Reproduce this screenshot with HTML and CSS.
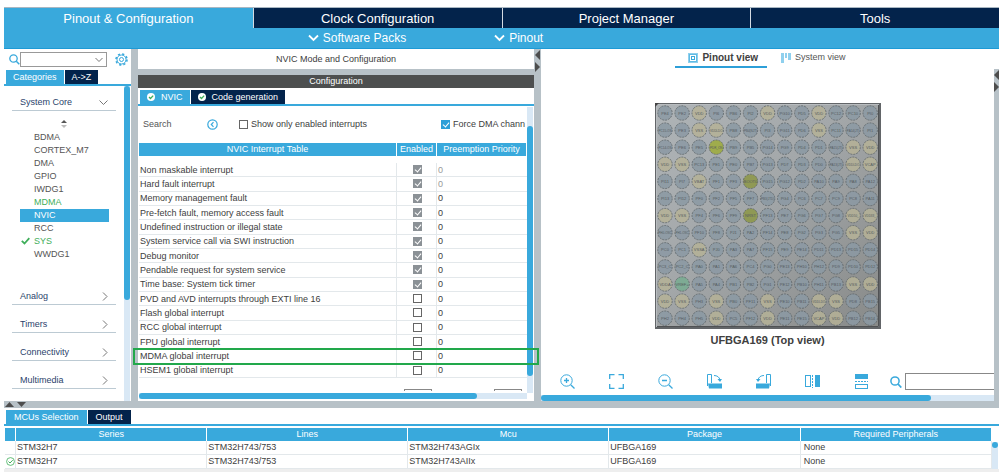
FILE: index.html
```html
<!DOCTYPE html>
<html lang="en">
<head>
    <meta charset="UTF-8">
    <meta name="viewport" content="width=device-width, initial-scale=1.0">
    <title>Pinout &amp; Configuration</title>
    <link rel="stylesheet" href="styles.css">
</head>
<body>
    <nav class="main-tabs">
        <button class="main-tab active">Pinout &amp; Configuration</button>
        <button class="main-tab">Clock Configuration</button>
        <button class="main-tab">Project Manager</button>
        <button class="main-tab">Tools</button>
    </nav>
    <div class="sub-bar">
        <button class="sub-menu">
            <svg width="11" height="8" viewBox="0 0 11 8"><path d="M1 1.500L5.500 6L10 1.500" fill="none" stroke="#fff" stroke-width="1.800"/></svg>
            Software Packs
        </button>
        <button class="sub-menu">
            <svg width="11" height="8" viewBox="0 0 11 8"><path d="M1 1.500L5.500 6L10 1.500" fill="none" stroke="#fff" stroke-width="1.800"/></svg>
            Pinout
        </button>
    </div>

    <main class="workspace">
        <!-- categories -->
        <aside class="sidebar">
            <div class="side-search">
                <svg width="11" height="11" viewBox="0 0 11 11"><circle cx="4.500" cy="4.500" r="3.700" fill="none" stroke="#39a9dc" stroke-width="1.300"/><path d="M7.300 7.300L10.300 10.300" stroke="#39a9dc" stroke-width="1.500"/></svg>
                <span class="combo">
                    <select aria-label="Search peripheral"><option></option></select>
                    <svg class="combo-arrow" width="8" height="6" viewBox="0 0 8 6"><path d="M.5 1L4 4.500L7.500 1" fill="none" stroke="#777"/></svg>
                </span>
                <button class="plain-btn" aria-label="Settings">
                    <svg width="13" height="13" viewBox="0 0 13 13" fill="none" stroke="#39a9dc"><circle cx="6.500" cy="6.500" r="5.500" stroke-width="1.600" stroke-dasharray="2.160 2.160"/><circle cx="6.500" cy="6.500" r="4.500"/><circle cx="6.500" cy="6.500" r="2"/></svg>
                </button>
            </div>
            <div class="tabs side-tabs">
                <button class="tab active">Categories</button>
                <button class="tab">A-&gt;Z</button>
            </div>
            <div class="side-body">
                <div class="side-list">
                    <button class="group">System Core
                        <svg width="9" height="6" viewBox="0 0 9 6"><path d="M.5 .5L4.500 4.500L8.500 .5" fill="none" stroke="#777"/></svg>
                    </button>
                    <svg class="sorter" width="6" height="8" viewBox="0 0 6 8"><path d="M0 3L3 0L6 3Z" fill="#555"/><path d="M0 5L3 8L6 5Z" fill="#bbb"/></svg>
                    <ul class="items">
                        <li>BDMA</li>
                        <li>CORTEX_M7</li>
                        <li>DMA</li>
                        <li>GPIO</li>
                        <li>IWDG1</li>
                        <li class="green">MDMA</li>
                        <li class="selected">NVIC</li>
                        <li>RCC</li>
                        <li class="green"><svg class="tick" width="9" height="8" viewBox="0 0 9 8"><path d="M.8 3.800L3.500 6.500L8.300 1.200" fill="none" stroke="#3fae5a" stroke-width="1.800"/></svg>SYS</li>
                        <li>WWDG1</li>
                    </ul>
                    <button class="group">Analog
                        <svg width="6" height="9" viewBox="0 0 6 9"><path d="M1 .5L5 4.500L1 8.500" fill="none" stroke="#777"/></svg>
                    </button>
                    <button class="group">Timers
                        <svg width="6" height="9" viewBox="0 0 6 9"><path d="M1 .5L5 4.500L1 8.500" fill="none" stroke="#777"/></svg>
                    </button>
                    <button class="group">Connectivity
                        <svg width="6" height="9" viewBox="0 0 6 9"><path d="M1 .5L5 4.500L1 8.500" fill="none" stroke="#777"/></svg>
                    </button>
                    <button class="group">Multimedia
                        <svg width="6" height="9" viewBox="0 0 6 9"><path d="M1 .5L5 4.500L1 8.500" fill="none" stroke="#777"/></svg>
                    </button>
                </div>
                <div class="vbar"><div class="thumb side-thumb"></div></div>
            </div>
        </aside>

        <div class="split"></div>

        <!-- NVIC configuration -->
        <section class="config">
            <div class="config-title">NVIC Mode and Configuration</div>
            <div class="config-head">Configuration</div>
            <div class="tabs config-tabs">
                <button class="tab active">
                    <svg width="8" height="8" viewBox="0 0 8 8"><circle cx="4" cy="4" r="4" fill="#fff"/><path d="M2 4L3.500 5.500L6.200 2.600" fill="none" stroke="#3fae5a" stroke-width="1.300"/></svg>
                    NVIC
                </button>
                <button class="tab">
                    <svg width="8" height="8" viewBox="0 0 8 8"><circle cx="4" cy="4" r="4" fill="#fff"/><path d="M2 4L3.500 5.500L6.200 2.600" fill="none" stroke="#3fae5a" stroke-width="1.300"/></svg>
                    Code generation
                </button>
            </div>
            <div class="config-body">
                <div class="config-content">
                    <div class="filters">
                        <span class="search-label">Search</span>
                        <button class="plain-btn" aria-label="Previous">
                            <svg width="11" height="11" viewBox="0 0 11 11" fill="none" stroke="#39a9dc"><circle cx="5.500" cy="5.500" r="4.700" stroke-width="1.200"/><path d="M6.500 3.200L4.300 5.500L6.500 7.800" stroke-width="1.200"/></svg>
                        </button>
                        <label class="check-label only-enabled"><input type="checkbox"> Show only enabled interrupts</label>
                        <label class="check-label"><input type="checkbox" class="blue" checked> Force DMA chann</label>
                    </div>
                    <table class="interrupts">
                        <thead>
                            <tr><th>NVIC Interrupt Table</th><th class="col-enabled">Enabled</th><th class="col-priority">Preemption Priority</th></tr>
                        </thead>
                        <tbody>
                            <tr class="off"><td>Non maskable interrupt</td><td><input type="checkbox" aria-label="Non maskable interrupt" checked disabled></td><td>0</td></tr>
                            <tr class="off"><td>Hard fault interrupt</td><td><input type="checkbox" aria-label="Hard fault interrupt" checked disabled></td><td>0</td></tr>
                            <tr><td>Memory management fault</td><td><input type="checkbox" aria-label="Memory management fault" checked disabled></td><td>0</td></tr>
                            <tr><td>Pre-fetch fault, memory access fault</td><td><input type="checkbox" aria-label="Pre-fetch fault" checked disabled></td><td>0</td></tr>
                            <tr><td>Undefined instruction or illegal state</td><td><input type="checkbox" aria-label="Undefined instruction" checked disabled></td><td>0</td></tr>
                            <tr><td>System service call via SWI instruction</td><td><input type="checkbox" aria-label="System service call" checked disabled></td><td>0</td></tr>
                            <tr><td>Debug monitor</td><td><input type="checkbox" aria-label="Debug monitor" checked disabled></td><td>0</td></tr>
                            <tr><td>Pendable request for system service</td><td><input type="checkbox" aria-label="Pendable request" checked disabled></td><td>0</td></tr>
                            <tr><td>Time base: System tick timer</td><td><input type="checkbox" aria-label="Time base" checked disabled></td><td>0</td></tr>
                            <tr><td>PVD and AVD interrupts through EXTI line 16</td><td><input type="checkbox" aria-label="PVD and AVD interrupts"></td><td>0</td></tr>
                            <tr><td>Flash global interrupt</td><td><input type="checkbox" aria-label="Flash global interrupt"></td><td>0</td></tr>
                            <tr><td>RCC global interrupt</td><td><input type="checkbox" aria-label="RCC global interrupt"></td><td>0</td></tr>
                            <tr><td>FPU global interrupt</td><td><input type="checkbox" aria-label="FPU global interrupt"></td><td>0</td></tr>
                            <tr><td>MDMA global interrupt</td><td><input type="checkbox" aria-label="MDMA global interrupt"></td><td>0</td></tr>
                            <tr><td>HSEM1 global interrupt</td><td><input type="checkbox" aria-label="HSEM1 global interrupt"></td><td>0</td></tr>
                        </tbody>
                    </table>
                    <div class="below-table">
                        <input type="text" aria-label="Preemption priority">
                        <input type="text" aria-label="Sub priority">
                    </div>
                </div>
                <div class="vbar"><div class="thumb config-thumb"></div></div>
                <div class="hbar"><div class="thumb hthumb"></div></div>
            </div>
            <div class="highlight"></div>
        </section>

        <div class="split arrows">
            <svg width="5" height="22" viewBox="0 0 5 22" fill="#4d4d4d"><path d="M5 0V10L0 5Z"/><path d="M0 12V22L5 17Z"/></svg>
        </div>

        <!-- pinout view -->
        <section class="pinout">
            <div class="view-tabs">
                <button class="view-tab active">
                    <svg width="10" height="10" viewBox="0 0 10 10" fill="none" stroke="#39a9dc"><rect x=".5" y=".5" width="9" height="9" stroke="#8fd0ee"/><rect x="1.500" y="1.500" width="7" height="7" stroke="#60bbe4"/><rect x="3.500" y="3.500" width="3" height="3"/></svg>
                    Pinout view
                </button>
                <button class="view-tab">
                    <svg width="10" height="10" viewBox="0 0 10 10" fill="#8fd0ee"><rect width="3" height="10"/><rect x="4" width="2" height="5"/><rect x="7" width="3" height="7"/></svg>
                    System view
                </button>
            </div>
            <div class="pinout-body">
                <div class="pinout-main">
                    <div class="canvas">
                        <svg id="chip" class="chip" width="226" height="226" viewBox="0 0 226 226">
                            <defs>
                                <linearGradient id="body" x1="0" y1="0" x2="1" y2="1">
                                    <stop offset="0" stop-color="#afb4b7"/>
                                    <stop offset=".45" stop-color="#a3a7a9"/>
                                    <stop offset="1" stop-color="#888a89"/>
                                </linearGradient>
                            </defs>
                            <rect width="226" height="226" fill="#626568"/>
                            <rect x="1" y="1" width="223" height="223" fill="#b8bcbf"/>
                            <rect x="2" y="2" width="221" height="221" fill="url(#body)"/>
                            <path d="M223.500 2V223.500H2" fill="none" stroke="#505254"/>
                            <path d="M0 0H4L0 4Z" fill="#444"/>
                        </svg>
                        <div class="caption">UFBGA169 (Top view)</div>
                    </div>
                    <div class="tools">
                        <button class="plain-btn" aria-label="Zoom in"><svg width="15" height="15" viewBox="0 0 15 15" fill="none" stroke="#39a9dc"><circle cx="6.500" cy="6.500" r="5.700"/><path d="M10.700 10.700L14.500 14.500M4 6.500H9M6.500 4V9" stroke-width="1.300"/></svg></button>
                        <button class="plain-btn" aria-label="Fit"><svg width="15" height="15" viewBox="0 0 15 15" fill="none" stroke="#39a9dc"><path d="M.7 5V.7H5.500M9.500 .7H14.300V5M14.300 10V14.300H9.500M5.500 14.300H.7V10" stroke-width="1.300"/></svg></button>
                        <button class="plain-btn" aria-label="Zoom out"><svg width="15" height="15" viewBox="0 0 15 15" fill="none" stroke="#39a9dc"><circle cx="6.500" cy="6.500" r="5.700"/><path d="M10.700 10.700L14.500 14.500M4 6.500H9" stroke-width="1.300"/></svg></button>
                        <button class="plain-btn" aria-label="Rotate right"><svg width="15" height="15" viewBox="0 0 15 15" fill="none" stroke="#39a9dc"><path d="M.5 12V.5H4.500V9"/><path d="M1 9.500H15V14.500H2Z" fill="#39a9dc" stroke="none"/><path d="M7 1.500C10 1.500 12.500 3 13 6"/><path d="M10.500 5H15L13 8Z" fill="#39a9dc" stroke="none"/></svg></button>
                        <button class="plain-btn" aria-label="Rotate left"><svg width="15" height="15" viewBox="0 0 15 15" fill="none" stroke="#39a9dc"><path d="M14.500 12V.5H10.500V9"/><path d="M14 9.500H0V14.500H13Z" fill="#39a9dc" stroke="none"/><path d="M8 1.500C5 1.500 2.500 3 2 6"/><path d="M4.500 5H0L2 8Z" fill="#39a9dc" stroke="none"/></svg></button>
                        <button class="plain-btn" aria-label="Flip horizontally"><svg width="15" height="15" viewBox="0 0 15 15" fill="none" stroke="#39a9dc"><rect x=".5" y="1.500" width="5" height="11"/><path d="M7.500 1V14" stroke-dasharray="2 1"/><rect x="10" y="1" width="5" height="12" fill="#39a9dc" stroke="none"/></svg></button>
                        <button class="plain-btn" aria-label="Flip vertically"><svg width="15" height="15" viewBox="0 0 15 15" fill="none" stroke="#39a9dc"><rect x="1" y="0" width="13" height="5" fill="#39a9dc" stroke="none"/><path d="M1 7.500H14" stroke-dasharray="2 1"/><rect x="1.500" y="10.500" width="12" height="4"/></svg></button>
                        <div class="find">
                            <svg width="12" height="12" viewBox="0 0 12 12"><circle cx="5" cy="5" r="4.100" fill="none" stroke="#39a9dc" stroke-width="1.500"/><path d="M8 8L11.300 11.500" stroke="#39a9dc" stroke-width="1.800"/></svg>
                            <input type="text" aria-label="Find pin">
                        </div>
                    </div>
                    <div class="hbar"><div class="thumb pin-thumb"></div></div>
                </div>
                <div class="split arrows">
                    <svg width="5" height="22" viewBox="0 0 5 22" fill="#4d4d4d"><path d="M5 0V10L0 5Z"/><path d="M0 12V22L5 17Z"/></svg>
                </div>
            </div>
        </section>
    </main>

    <div class="row-split">
        <svg width="21" height="5" viewBox="0 0 21 5" fill="#4d4d4d"><path d="M0 5L4.500 0L9 5Z"/><path d="M12 0H21L16.500 5Z"/></svg>
    </div>

    <!-- MCU list -->
    <section class="mcus">
        <div class="tabs mcu-tabs">
            <button class="tab active">MCUs Selection</button>
            <button class="tab">Output</button>
        </div>
        <div class="mcu-body">
            <table class="mcu-table">
                <thead>
                    <tr><th class="col-state"></th><th>Series</th><th class="wide">Lines</th><th class="wide">Mcu</th><th>Package</th><th>Required Peripherals</th></tr>
                </thead>
                <tbody>
                    <tr><td></td><td>STM32H7</td><td>STM32H743/753</td><td>STM32H743AGIx</td><td>UFBGA169</td><td>None</td></tr>
                    <tr><td><svg width="9" height="9" viewBox="0 0 9 9" fill="none" stroke="#3fae5a"><circle cx="4.500" cy="4.500" r="3.900" stroke-width=".8"/><path d="M2.500 4.500L4 6L6.700 3.200"/></svg></td><td>STM32H7</td><td>STM32H743/753</td><td>STM32H743AIIx</td><td>UFBGA169</td><td>None</td></tr>
                </tbody>
            </table>
            <div class="vbar mcu-bar"><div class="dot"></div></div>
        </div>
    </section>

    <script src="script.js"></script>
</body>
</html>
```

FILE: styles.css
```css
*{
    box-sizing: border-box;
}

body{
    margin: 0;
    padding: 7px 0 5px 4px;
    min-height: 100vh;
    display: flex;
    flex-direction: column;
    background-color: #fff;
    color: #404040;
    font-family: "Liberation Sans", Arial, sans-serif;
    font-size: 9px;
    line-height: 13px;
}

button{
    border: 0;
    padding: 0;
    background: none;
    color: inherit;
    font: inherit;
}

svg{
    display: block;
    flex: none;
}

table{
    border-collapse: separate;
    border-spacing: 0;
    table-layout: fixed;
    width: 100%;
}

th, td{
    padding: 0;
}

td{
    padding-left: 1px;
}

th{
    font-weight: normal;
    color: #fff;
    background-color: #39a9dc;
}

/* top navigation */
.main-tabs{
    display: grid;
    grid-template-columns: repeat(4, 1fr);
    border-top: 1px solid #a9b7c2;
}

.main-tab{
    height: 20px;
    font-size: 13px;
    color: #fff;
    background-color: #03234b;
    border-left: 1px solid #d5dbe2;
}

.main-tab.active{
    background-color: #39a9dc;
    border-left: 0;
}

.sub-bar{
    height: 21px;
    display: flex;
    justify-content: center;
    gap: 88px;
    padding-right: 152px;
    background-color: #39a9dc;
    border-bottom: 1px solid #1d9ad6;
}

.sub-menu{
    display: flex;
    align-items: center;
    gap: 4px;
    font-size: 12px;
    color: #fff;
}

/* three columns */
.workspace{
    flex: 1;
    display: grid;
    grid-template-columns: 127px 7px 396fr 7px 458fr;
}

.split{
    background-color: #b7c1c7;
}

.arrows{
    padding: 1px 0 0 1px;
}

.tabs{
    display: flex;
    gap: 1px;
    border-bottom: 2px solid #39a9dc;
}

.tab{
    display: flex;
    align-items: center;
    height: 14px;
    padding: 0 7px;
    gap: 6px;
    color: #fff;
    background-color: #03234b;
}

.tab.active{
    background-color: #39a9dc;
}

.vbar{
    width: 6px;
    background-color: #d9e8f5;
}

.hbar{
    height: 6px;
    background-color: #d9e8f5;
}

.thumb{
    border-radius: 3px;
    background-color: #39a9dc;
}

.plain-btn{
    display: flex;
}

/* sidebar */
.sidebar{
    display: flex;
    flex-direction: column;
}

.side-search{
    height: 20px;
    display: flex;
    align-items: center;
    padding: 0 3px 0 5px;
}

.combo{
    position: relative;
    flex: 1;
    height: 15px;
    margin-right: 8px;
}

.combo select{
    display: block;
    width: 100%;
    height: 15px;
    appearance: none;
    background-color: #fff;
    border: 1px solid #999;
    border-radius: 0;
}

.combo-arrow{
    position: absolute;
    right: 4px;
    top: 5px;
}

.side-tabs{
    padding: 1px 0 0 2px;
}

.side-body{
    flex: 1;
    display: flex;
}

.side-list{
    flex: 1;
    padding: 9px 8px 0;
}

.side-thumb{
    height: 68%;
}

.side-body .vbar{
    margin-right: 1px;
}

.group{
    display: flex;
    align-items: center;
    justify-content: space-between;
    width: 100%;
    height: 16px;
    margin-bottom: 12px;
    padding: 0 8px;
    color: #2b3f6b;
    border-bottom: 1px solid #bccad3;
}

.sorter{
    margin: -3px auto 3px;
}

.items{
    margin: 0 0 28px;
    padding: 0 7px 0 8px;
    list-style: none;
}

.items li{
    position: relative;
    padding-left: 14px;
    color: #555;
}

.items .green{
    color: #3fae5a;
}

.items .selected{
    color: #fff;
    background-color: #39a9dc;
}

.tick{
    position: absolute;
    left: 1px;
    top: 2px;
}

/* NVIC panel */
.config{
    position: relative;
    display: flex;
    flex-direction: column;
    min-width: 0;
}

.config-title{
    height: 20px;
    line-height: 20px;
    text-align: center;
}

.config-head{
    border-top: 6px solid #b7c1c7;
    text-align: center;
    color: #fff;
    background-color: #4d4f4f;
}

.config-tabs{
    padding: 2px 0 0 2px;
}

.config-body{
    flex: 1;
    display: grid;
    grid-template-columns: 1fr 6px;
    grid-template-rows: 1fr 6px;
    padding: 1px 1px 2px 1px;
}

.config-content{
    height: 284px;
    overflow: hidden;
}

.config-thumb{
    height: 250px;
    margin-top: 19px;
}

.hthumb{
    width: 87%;
    height: 6px;
}

.filters{
    display: flex;
    align-items: center;
    height: 34px;
    white-space: nowrap;
}

.search-label{
    flex: none;
    width: 68px;
    padding-left: 4px;
    color: #555;
}

.only-enabled{
    width: 202px;
    margin-left: 21px;
}

.check-label{
    flex: none;
    display: flex;
    align-items: center;
    gap: 3px;
}

input[type="checkbox"]{
    position: relative;
    display: block;
    width: 9px;
    height: 9px;
    margin: 0;
    appearance: none;
    background-color: #fff;
    border: 1px solid #666;
}

input[type="checkbox"]:checked{
    background-color: #8b9196;
    border-color: #8b9196;
}

input[type="checkbox"].blue:checked{
    background-color: #2d9fd8;
    border-color: #2d9fd8;
}

input[type="checkbox"]:checked::after{
    content: "";
    position: absolute;
    left: 2px;
    top: 0;
    width: 3px;
    height: 5px;
    border: solid #fff;
    border-width: 0 1px 1px 0;
    transform: rotate(40deg);
}

.interrupts{
    height: 235px;
    margin-top: 2px;
}

.interrupts th{
    height: 20px;
    border-right: 1px solid #fff;
    border-bottom: 7px solid #fff;
}

.col-enabled{
    width: 40px;
}

.col-priority{
    width: 90px;
}

.interrupts td{
    line-height: 12px;
    border-bottom: 1px solid #e3e8eb;
    border-right: 1px solid #e3e8eb;
}

.interrupts td:last-child{
    border-right: 0;
}

.interrupts td input{
    margin: 0 auto;
}

.off td:last-child{
    color: #999;
}

.below-table{
    display: flex;
    justify-content: flex-end;
    gap: 62px;
    padding: 11px 5px 0 0;
}

.below-table input{
    width: 28px;
    height: 15px;
    border: 1px solid #888;
}

/* frame around the MDMA row */
.highlight{
    position: absolute;
    left: -5px;
    right: -5px;
    top: 299px;
    height: 17px;
    border: 2px solid #22a84b;
    z-index: 1;
}

/* pinout */
.pinout{
    display: flex;
    flex-direction: column;
    min-width: 0;
}

.view-tabs{
    height: 20px;
    display: flex;
    justify-content: center;
    gap: 5px;
    padding: 0 10px 1px 0;
}

.view-tab{
    display: flex;
    align-items: center;
    gap: 4px;
    padding: 0 9px;
    color: #555;
    border-bottom: 2px solid transparent;
}

.view-tab.active{
    padding: 0 9px 0 13px;
    font-size: 10px;
    font-weight: bold;
    color: #404040;
    border-bottom-color: #2d9fd8;
}

.pinout-body{
    flex: 1;
    display: grid;
    grid-template-columns: 1fr 5px;
}

.pinout-body .arrows{
    padding-left: 0;
}

.pinout-main{
    display: flex;
    flex-direction: column;
    min-width: 0;
}

.canvas{
    flex: 1;
    padding-top: 34px;
}

.chip{
    margin: 0 auto;
}

.pin-label{
    font-size: 4px;
    text-anchor: middle;
    fill: #555b60;
}

.caption{
    margin-top: 5px;
    text-align: center;
    font-size: 11px;
    font-weight: bold;
}

.tools{
    display: flex;
    align-items: center;
    gap: 34px;
    padding-left: 19px;
    margin-bottom: 5px;
}

.find{
    flex: 1;
    display: flex;
    align-items: center;
    gap: 3px;
    margin-left: -13px;
}

.find input{
    flex: 1;
    min-width: 0;
    height: 17px;
    border: 1px solid #888;
    border-right: 0;
}

.pin-thumb{
    width: 86%;
    height: 6px;
}

.row-split{
    height: 7px;
    padding: 1px 0 0 1px;
    background-color: #b7c1c7;
}

/* bottom table */
.mcu-tabs{
    padding: 2px 0 0 2px;
}

.mcu-tabs .tab{
    padding: 0 8px;
}

.mcu-body{
    display: flex;
    padding: 2px 0 0 1px;
    border-bottom: 3px solid #eee;
}

.mcu-table{
    flex: 1;
}

.mcu-table th{
    height: 13px;
    border-right: 1px solid #fff;
}

.mcu-table .wide{
    width: 201px;
}

.mcu-table .col-state{
    width: 11px;
}

.mcu-table td{
    height: 14px;
    border-right: 1px solid #e3e8eb;
    border-bottom: 1px solid #e3e8eb;
}

.mcu-table td:last-child{
    padding-left: 3px;
}

.mcu-bar{
    margin: 14px 1px 0 0;
}

.dot{
    width: 6px;
    height: 6px;
    border-radius: 3px;
    background-color: #39a9dc;
}
```

FILE: script.js
```js
const linhas = [
    'PE4 PE2 VDD PI6 PB6 PI2 VDD PG10 PD5 VDD PC12 PC10 PI0',
    'PC15-OS PE3 VSS VDDLDO PB8 PB4(NJT) PI3 PG11 PD6 VSS PC11 PA14(JT) PI1',
    'PC14-OS PE6 PE5 PDR_ON PB9 PB5 PG14 PG9 PD4 PD1 PA15(JT) VSS VDD',
    'VDD VSS PC13 PE1 PE0 PB7 PG13 PD7 PD3 PD0 PA13(JT) VDDLDO VCAP',
    'PI11 PI7 VBAT PF1 PF3 BOOT0 PG15 PG12 PD2 PA10 PA9 PA8 PA12',
    'PI13 PI12 PF0 PF2 PF5 PF7 PB3(JTD) PG4 PC6 PC7 PC9 PC8 PA11',
    'VDD VSS PF4 PF6 PF9 NRST PF13 PE7 PG6 PG7 PG8 VDD50_ VDD33_',
    'PH0-OSC PH1-OSC PF10 PF8 PJ1 PA2 PF14 PE8 PG2 PG3 PG5 VSS VDD',
    'PC0 PC1 VSSA PJ0 PA3 PA7 PF15 PE9 PE14 PD11 PD13 PD15 PD14',
    'PC3_C PC2_C PA0 PA1 PA6 PC4 PG0 PE13 PH10 PH12 PD9 PD10 PD12',
    'VDDA VREF+ PA5 PA4 PB1 PB2 PG1 PE12 PB10 PH11 PB13 VSS VDD',
    'VDD VSS PH3 VSS PB0 PF11 VSS PE10 PB11 VDDLDO VSS PD8 PB15',
    'PH2 PH4 PH5 VDD PC5 PF12 VDD PE11 PE15 VCAP VDD PB12 PB14'
]

function cor_do_pino(nome){
    if (nome == 'VREF+') return '#78ab90'
    if (nome == 'PDR_ON') return '#9dab3b'
    if (nome == 'BOOT0' || nome == 'NRST') return '#8c9645'
    if (nome.startsWith('V')) return '#b5b297'
    return '#8b99a3'
}

function criar(tag, atributos){
    const elemento = document.createElementNS('http://www.w3.org/2000/svg', tag)
    for (const nome in atributos){
        elemento.setAttribute(nome, atributos[nome])
    }
    return elemento
}

const chip = document.getElementById('chip')

linhas.forEach((linha, i) => {
    linha.split(' ').forEach((nome, j) => {
        const x = 10 + j * 17.1
        const y = 10 + i * 17.1
        chip.appendChild(criar('circle', {
            cx: x, cy: y, r: 7.2,
            fill: cor_do_pino(nome),
            'fill-opacity': 0.85,
            stroke: '#5d6468',
            'stroke-width': 0.8,
            'stroke-dasharray': '2 1'
        }))
        const texto = criar('text', {x: x, y: y + 1.5, class: 'pin-label'})
        if (nome.length > 5) texto.style.fontSize = '3px'
        texto.textContent = nome
        chip.appendChild(texto)
    })
})
```
